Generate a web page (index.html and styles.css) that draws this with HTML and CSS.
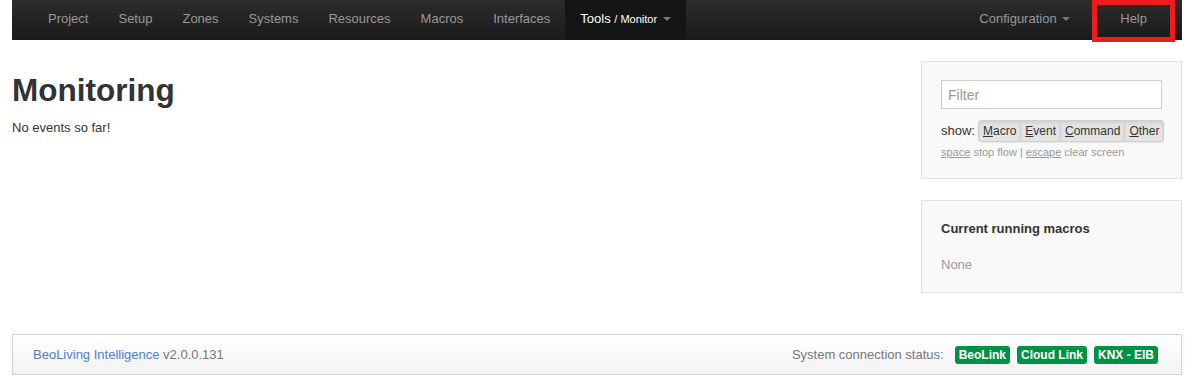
FILE: index.html
```html
<!DOCTYPE html>
<html>
<head>
<meta charset="utf-8">
<title>Monitoring</title>
<link rel="stylesheet" href="styles.css">
</head>
<body>
<div class="container">
  <div class="navbar">
    <ul class="nav">
      <li><a href="#">Project</a></li>
      <li><a href="#">Setup</a></li>
      <li><a href="#">Zones</a></li>
      <li><a href="#">Systems</a></li>
      <li><a href="#">Resources</a></li>
      <li><a href="#">Macros</a></li>
      <li><a href="#">Interfaces</a></li>
      <li class="active"><a href="#">Tools <small>/ Monitor</small> <b class="caret"></b></a></li>
    </ul>
    <ul class="nav nav-right">
      <li><a href="#">Configuration <b class="caret"></b></a></li>
      <li class="divider"></li>
      <li class="help"><a href="#">Help</a><span class="highlight"></span></li>
    </ul>
  </div>

  <div class="row">
    <div class="main">
      <h1>Monitoring</h1>
      <p>No events so far!</p>
    </div>
    <div class="side">
      <div class="well">
        <input class="filter" type="text" placeholder="Filter">
        <div class="show">
          <span class="show-label">show:</span>
          <div class="btn-group">
            <button class="btn"><u>M</u>acro</button><button class="btn"><u>E</u>vent</button><button class="btn"><u>C</u>ommand</button><button class="btn"><u>O</u>ther</button>
          </div>
        </div>
        <div class="hint"><a href="#">space</a> stop flow | <a href="#">escape</a> clear screen</div>
      </div>
      <div class="well well-macros">
        <h5>Current running macros</h5>
        <div class="muted">None</div>
      </div>
    </div>
  </div>

  <div class="footer">
    <div class="footer-left"><a href="#">BeoLiving Intelligence</a> v2.0.0.131</div>
    <div class="footer-right">
      <span class="status-label">System connection status:</span>
      <span class="badge">BeoLink</span>
      <span class="badge">Cloud Link</span>
      <span class="badge">KNX - EIB</span>
    </div>
  </div>
</div>
</body>
</html>
```

FILE: styles.css
```css
* { box-sizing: border-box; }
html, body { margin: 0; padding: 0; background: #fff; }
body {
  font-family: "Liberation Sans", Arial, sans-serif;
  font-size: 13px;
  line-height: 18px;
  color: #333;
}
.container {
  width: 1170px;
  margin: 0 auto;
}

/* navbar */
.navbar {
  height: 40px;
  display: flex;
  justify-content: space-between;
  padding: 0 20px 0 21px;
  background: linear-gradient(#2c2c2c, #1a1a1a);
}
.nav {
  list-style: none;
  margin: 0;
  padding: 0;
  display: flex;
}
.nav li { position: relative; display: flex; }
.nav a {
  display: block;
  height: 40px;
  line-height: 38px;
  padding: 0 15px;
  color: #999;
  text-decoration: none;
  white-space: nowrap;
}
.nav .active a {
  background: #151515;
  color: #fff;
}
.nav .active small { font-size: 11px; }
.caret {
  display: inline-block;
  width: 0;
  height: 0;
  margin-left: 2px;
  vertical-align: middle;
  border-top: 4px solid #777;
  border-left: 4px solid transparent;
  border-right: 4px solid transparent;
  position: relative;
  top: -1px;
}
.nav .divider {
  width: 20px;
  height: 40px;
}
.help .highlight {
  position: absolute;
  left: -13px;
  top: 0;
  width: 83px;
  height: 42px;
  border: 5px solid #ee1c1c;
  pointer-events: none;
}

/* main row */
.row {
  display: flex;
  justify-content: space-between;
  margin-top: 21px;
}
.main { flex: 1; }
h1 {
  margin: 11px 0 11px;
  font-size: 31.5px;
  line-height: 36px;
  font-weight: bold;
  color: #333;
}
.main p { margin: 0; }

.side { width: 261px; }
.well {
  background: #f9f9f9;
  border: 1px solid #e3e3e3;
  padding: 18px 19px 19px;
  margin-bottom: 21px;
}
.filter {
  display: block;
  width: 100%;
  height: 29px;
  padding: 4px 6px;
  border: 1px solid #ccc;
  background: #fff;
  font-family: "Liberation Sans", Arial, sans-serif;
  font-size: 14px;
  color: #555;
  outline: none;
}
.filter::placeholder { color: #999; }
.show {
  display: flex;
  align-items: center;
  margin-top: 11px;
}
.show-label { margin-right: 3px; font-size: 13px; }
.btn-group {
  display: flex;
  border-radius: 4px;
  box-shadow: 0 1px 2px rgba(0,0,0,.08);
}
.btn {
  height: 22px;
  padding: 0 4px;
  margin: 0;
  font-family: "Liberation Sans", Arial, sans-serif;
  font-size: 12px;
  line-height: 20px;
  color: #333;
  background: #e3e3e3;
  border: 1px solid #cfcfcf;
  box-shadow: inset 0 2px 3px rgba(0,0,0,.08);
  cursor: pointer;
}
.btn + .btn { border-left: 1px solid #d0d0d0; margin-left: -1px; }
.btn:first-child { border-radius: 4px 0 0 4px; }
.btn:last-child { border-radius: 0 4px 4px 0; }
.hint {
  margin-top: 3px;
  font-size: 11px;
  line-height: 14px;
  color: #999;
}
.hint a { color: #999; text-decoration: underline; }

.well-macros { padding: 19px 19px 18px; }
h5 {
  margin: 0 0 18px;
  font-size: 13px;
  line-height: 18px;
  font-weight: bold;
  color: #333;
}
.muted { color: #999; }

/* footer */
.footer {
  display: flex;
  justify-content: space-between;
  align-items: center;
  height: 41px;
  margin-top: 20px;
  padding: 0 23px 0 20px;
  background: linear-gradient(#ffffff, #f2f2f2);
  border: 1px solid #d4d4d4;
  box-shadow: 0 1px 4px rgba(0,0,0,.07);
  color: #777;
}
.footer a { color: #4e7fcd; text-decoration: none; }
.footer-right { display: flex; align-items: center; }
.status-label { margin-right: 11px; }
.badge {
  display: inline-block;
  height: 18px;
  line-height: 18px;
  padding: 0 4px;
  margin-left: 7px;
  border-radius: 3px;
  background: #009245;
  color: #fff;
  font-size: 12px;
  font-weight: bold;
}
.status-label + .badge { margin-left: 0; }
```
